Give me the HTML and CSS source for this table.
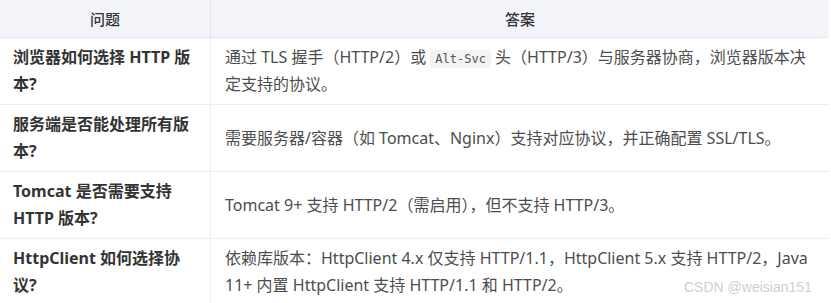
FILE: index.html
```html
<!DOCTYPE html>
<html lang="zh-CN">
<head>
<meta charset="utf-8">
<link rel="stylesheet" href="styles.css">
</head>
<body>
<div class="wrap">
<table class="qa">
  <thead>
    <tr><th class="c-q">问题</th><th class="c-a">答案</th></tr>
  </thead>
  <tbody>
    <tr>
      <td class="q">浏览器如何选择 HTTP 版本?</td>
      <td class="a">通过 TLS 握手（HTTP/2）或 <code>Alt-Svc</code> 头（HTTP/3）与服务器协商，浏览器版本决定支持的协议。</td>
    </tr>
    <tr>
      <td class="q">服务端是否能处理所有版本?</td>
      <td class="a">需要服务器/容器（如 Tomcat、Nginx）支持对应协议，并正确配置 SSL/TLS。</td>
    </tr>
    <tr>
      <td class="q">Tomcat 是否需要支持 HTTP 版本?</td>
      <td class="a">Tomcat 9+ 支持 HTTP/2（需启用），但不支持 HTTP/3。</td>
    </tr>
    <tr>
      <td class="q">HttpClient 如何选择协议?</td>
      <td class="a">依赖库版本：HttpClient 4.x 仅支持 HTTP/1.1，HttpClient 5.x 支持 HTTP/2，Java 11+ 内置 HttpClient 支持 HTTP/1.1 和 HTTP/2。</td>
    </tr>
  </tbody>
</table>
<div class="mark">CSDN @weisian151</div>
</div>
</body>
</html>
```

FILE: styles.css
```css
html, body {
  margin: 0;
  padding: 0;
  background: #ffffff;
}
body {
  font-family: "Noto Sans", "Noto Sans CJK SC", sans-serif;
  font-size: 16px;
  color: #4d4d4d;
  overflow: hidden;
}
.wrap {
  position: relative;
  width: 831px;
  height: 303px;
  overflow: hidden;
}
.qa {
  border-collapse: collapse;
  width: 829px;
  table-layout: fixed;
}
.qa th {
  background: #f3f3fa;
  color: #333333;
  font-weight: 500;
  height: 37px;
  padding: 0 12px;
  text-align: center;
  border-bottom: 1px solid #e6e6f0;
  line-height: 26px;
  font-size: 15px;
}
.qa th.c-q {
  width: 186px;
  border-right: 1px solid #e6e6f0;
}
.qa td {
  line-height: 27px;
  padding: 6px 12px 6px 13px;
  vertical-align: middle;
  border-bottom: 1px solid #ececf3;
  height: 54px;
}
.qa td.q {
  font-weight: 700;
  color: #333333;
  border-right: 1px solid #ececf3;
}
.qa td.a {
  padding-left: 14px;
  padding-right: 12px;
}
code {
  font-family: "DejaVu Sans Mono", "Liberation Mono", monospace;
  font-size: 12px;
  line-height: 18px;
  background: #f3f3f5;
  color: #555555;
  border-radius: 4px;
  padding: 2px 5px;
}
.mark {
  position: absolute;
  left: 684px;
  top: 278px;
  font-family: "Liberation Sans", sans-serif;
  font-size: 14px;
  line-height: 18px;
  color: #cfcfcf;
}
```
